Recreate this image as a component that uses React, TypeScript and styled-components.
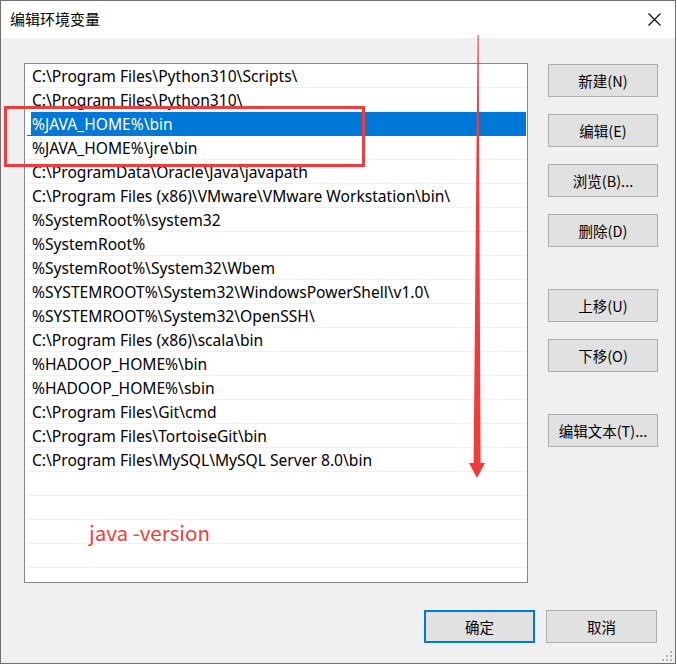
import React from "react";
import styled, { createGlobalStyle } from "styled-components";

const Global = createGlobalStyle`
  html, body { margin: 0; padding: 0; background: #ffffff; }
  body { width: 677px; height: 664px; overflow: hidden; }
  * { box-sizing: border-box; }
`;

const FONT = `"Noto Sans", "Noto Sans CJK SC", sans-serif`;

const Window = styled.div`
  position: relative;
  width: 676px;
  height: 664px;
  border: 1px solid #6f6f6f;
  background: #f0f0f0;
  display: flex;
  flex-direction: column;
  font-family: ${FONT};
  color: #000;
`;

const TitleBar = styled.div`
  height: 37px;
  background: #ffffff;
  display: flex;
  align-items: center;
  justify-content: space-between;
  padding: 0 14px 0 9px;
`;

const Title = styled.span`
  font-size: 15px;
  font-family: "Noto Sans CJK SC", sans-serif;
  margin-top: -2px;
`;

const Body = styled.div`
  flex: 1;
  display: flex;
  flex-direction: column;
  padding: 25px 17px 20px 23px;
`;

const Main = styled.div`
  display: flex;
  gap: 20px;
`;

const ListBox = styled.div`
  width: 504px;
  height: 520px;
  border: 1px solid #828790;
  background: #fff;
  padding: 0 1px;
  overflow: hidden;
`;

const Row = styled.div<{ $selected?: boolean }>`
  height: 24px;
  margin-left: 1px;
  border-bottom: 1px solid ${(p) => (p.$selected ? "#0078d7" : "#f0f0f0")};
  display: flex;
`;

const RowInner = styled.div<{ $selected?: boolean }>`
  flex: 1;
  margin-left: 4px;
  padding-left: 1px;
  padding-top: 1px;
  background: ${(p) => (p.$selected ? "#0078d7" : "transparent")};
  color: ${(p) => (p.$selected ? "#fff" : "#000")};
  font-size: 15.6px;
  line-height: 23px;
  white-space: nowrap;
  margin-bottom: ${(p) => (p.$selected ? "-1px" : "0")};
`;

const ButtonColumn = styled.div`
  display: flex;
  flex-direction: column;
  padding-top: 1px;
`;

const Button = styled.button<{ $gap?: number; $primary?: boolean; $w?: number }>`
  width: ${(p) => p.$w ?? 110}px;
  height: 33px;
  margin-top: ${(p) => p.$gap ?? 0}px;
  background: #e1e1e1;
  border: ${(p) => (p.$primary ? "2px solid #0078d7" : "1px solid #adadad")};
  font-family: "Noto Sans CJK SC", sans-serif;
  font-size: 14.5px;
  color: #000;
  padding: 0;
  display: flex;
  align-items: center;
  justify-content: center;
`;

const Footer = styled.div`
  margin-top: auto;
  display: flex;
  justify-content: flex-end;
  gap: 11px;
  padding-right: 1px;
`;

const Grip = styled.svg`
  position: absolute;
  right: 3px;
  bottom: 2px;
`;

const Overlay = styled.svg`
  position: absolute;
  left: -1px;
  top: -1px;
  pointer-events: none;
`;

const Highlight = styled.div`
  position: absolute;
  left: 3px;
  top: 105px;
  width: 361px;
  height: 61px;
  border: 3px solid #f23c3c;
`;

const Note = styled.span`
  position: absolute;
  left: 88px;
  top: 516px;
  font-family: "Noto Sans CJK SC", sans-serif;
  font-size: 20.6px;
  color: #f53d3d;
`;

const paths = [
  "C:\\Program Files\\Python310\\Scripts\\",
  "C:\\Program Files\\Python310\\",
  "%JAVA_HOME%\\bin",
  "%JAVA_HOME%\\jre\\bin",
  "C:\\ProgramData\\Oracle\\Java\\javapath",
  "C:\\Program Files (x86)\\VMware\\VMware Workstation\\bin\\",
  "%SystemRoot%\\system32",
  "%SystemRoot%",
  "%SystemRoot%\\System32\\Wbem",
  "%SYSTEMROOT%\\System32\\WindowsPowerShell\\v1.0\\",
  "%SYSTEMROOT%\\System32\\OpenSSH\\",
  "C:\\Program Files (x86)\\scala\\bin",
  "%HADOOP_HOME%\\bin",
  "%HADOOP_HOME%\\sbin",
  "C:\\Program Files\\Git\\cmd",
  "C:\\Program Files\\TortoiseGit\\bin",
  "C:\\Program Files\\MySQL\\MySQL Server 8.0\\bin",
  "",
  "",
  "",
  "",
  "",
];

export default function App() {
  return (
    <>
      <Global />
      <Window>
        <TitleBar>
          <Title>编辑环境变量</Title>
          <svg width="13" height="13" viewBox="0 0 13 13">
            <path d="M0.5 0.5 L12.5 12.5 M12.5 0.5 L0.5 12.5" stroke="#000" strokeWidth="1.1" />
          </svg>
        </TitleBar>
        <Body>
          <Main>
            <ListBox>
              {paths.map((p, i) => (
                <Row key={i} $selected={i === 2}>
                  <RowInner $selected={i === 2}>{p}</RowInner>
                </Row>
              ))}
            </ListBox>
            <ButtonColumn>
              <Button>新建(N)</Button>
              <Button $gap={17}>编辑(E)</Button>
              <Button $gap={17}>浏览(B)...</Button>
              <Button $gap={17}>删除(D)</Button>
              <Button $gap={42}>上移(U)</Button>
              <Button $gap={17}>下移(O)</Button>
              <Button $gap={42}>编辑文本(T)...</Button>
            </ButtonColumn>
          </Main>
          <Footer>
            <Button $primary $w={111}>确定</Button>
            <Button $w={111}>取消</Button>
          </Footer>
        </Body>
        <Grip width="10" height="10" viewBox="0 0 10 10">
          <g fill="#b4b4b4">
            <rect x="8" y="0" width="2" height="2" />
            <rect x="4" y="4" width="2" height="2" />
            <rect x="8" y="4" width="2" height="2" />
            <rect x="0" y="8" width="2" height="2" />
            <rect x="4" y="8" width="2" height="2" />
            <rect x="8" y="8" width="2" height="2" />
          </g>
        </Grip>
        <Highlight />
        <Note>java -version</Note>
        <Overlay width="677" height="664" viewBox="0 0 677 664">
          <polygon
            points="477.6,35 478.6,35 480.6,463 485,463 477,478 469,463 473.6,463"
            fill="#f23c3c"
          />
        </Overlay>
      </Window>
    </>
  );
}
